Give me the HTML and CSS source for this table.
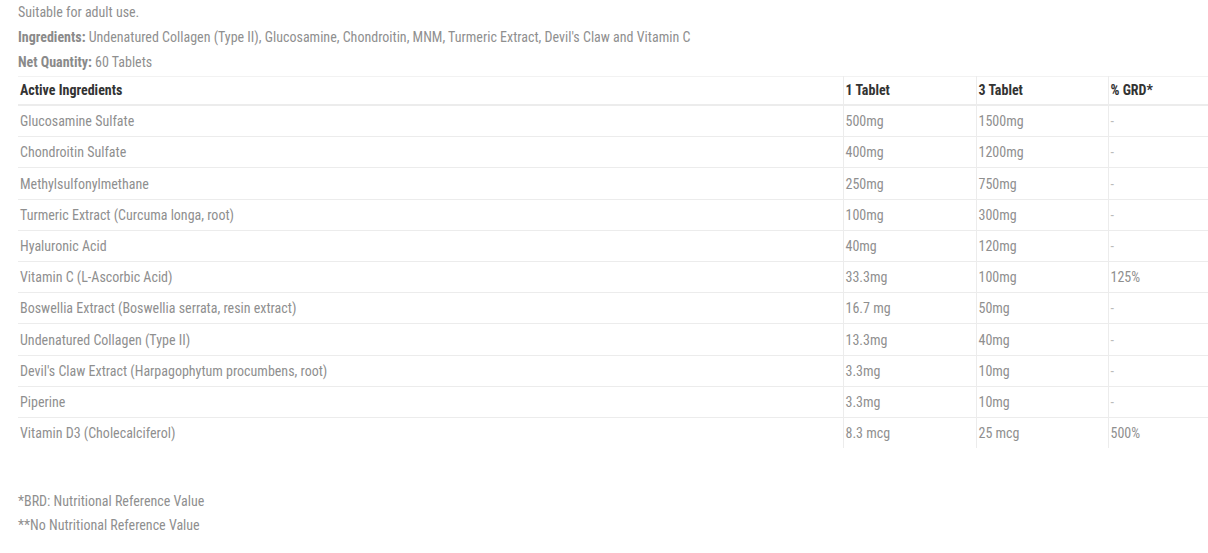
FILE: index.html
```html
<!DOCTYPE html>
<html>
<head>
<meta charset="utf-8">
<link rel="stylesheet" href="styles.css">
</head>
<body>
<div class="page">
  <p class="line">Suitable for adult use.</p>
  <p class="line"><strong>Ingredients:</strong> Undenatured Collagen (Type II), Glucosamine, Chondroitin, MNM, Turmeric Extract, Devil's Claw and Vitamin C</p>
  <p class="line"><strong>Net Quantity:</strong> 60 Tablets</p>
  <table class="facts">
    <colgroup>
      <col class="c1"><col class="c2"><col class="c3"><col class="c4">
    </colgroup>
    <thead>
      <tr><th>Active Ingredients</th><th>1 Tablet</th><th>3 Tablet</th><th>% GRD*</th></tr>
    </thead>
    <tbody>
      <tr><td>Glucosamine Sulfate</td><td>500mg</td><td>1500mg</td><td class="dash">-</td></tr>
      <tr><td>Chondroitin Sulfate</td><td>400mg</td><td>1200mg</td><td class="dash">-</td></tr>
      <tr><td>Methylsulfonylmethane</td><td>250mg</td><td>750mg</td><td class="dash">-</td></tr>
      <tr><td>Turmeric Extract (Curcuma longa, root)</td><td>100mg</td><td>300mg</td><td class="dash">-</td></tr>
      <tr><td>Hyaluronic Acid</td><td>40mg</td><td>120mg</td><td class="dash">-</td></tr>
      <tr><td>Vitamin C (L-Ascorbic Acid)</td><td>33.3mg</td><td>100mg</td><td>125%</td></tr>
      <tr><td>Boswellia Extract (Boswellia serrata, resin extract)</td><td>16.7 mg</td><td>50mg</td><td class="dash">-</td></tr>
      <tr><td>Undenatured Collagen (Type II)</td><td>13.3mg</td><td>40mg</td><td class="dash">-</td></tr>
      <tr><td>Devil's Claw Extract (Harpagophytum procumbens, root)</td><td>3.3mg</td><td>10mg</td><td class="dash">-</td></tr>
      <tr><td>Piperine</td><td>3.3mg</td><td>10mg</td><td class="dash">-</td></tr>
      <tr><td>Vitamin D3 (Cholecalciferol)</td><td>8.3 mcg</td><td>25 mcg</td><td>500%</td></tr>
    </tbody>
  </table>
  <div class="notes">
    <p class="line">*BRD: Nutritional Reference Value</p>
    <p class="line">**No Nutritional Reference Value</p>
  </div>
</div>
</body>
</html>
```
FILE: styles.css
```css
html, body {
  margin: 0;
  padding: 0;
  background: #fff;
  overflow: hidden;
}
body {
  font-family: "Roboto Condensed", "Liberation Sans Narrow", "DejaVu Sans Condensed", Roboto, sans-serif;
  font-size: 14px;
  color: #8f8f8f;
}
.page {
  padding-left: 18px;
  width: 1222px;
}
.line {
  margin: 0;
  line-height: 25px;
}
.line strong {
  font-weight: 700;
  color: #8a8a8a;
}
.facts {
  width: 1222px;
  border-collapse: collapse;
  table-layout: fixed;
  margin-top: 1px;
  border-top: 1px solid #f2f2f2;
}
.c1 { width: 825px; }
.c2 { width: 133px; }
.c3 { width: 132px; }
.c4 { width: 132px; }
.facts th {
  text-align: left;
  font-weight: 700;
  color: #333;
  line-height: 20px;
  padding: 3px 2px 4px 2px;
  border-bottom: 2px solid #ececec;
}
.facts td {
  line-height: 21px;
  padding: 5.2px 2px 4px 2px;
  border-top: 1px solid #ececec;
}
.facts tbody tr:first-child td {
  border-top: none;
}
.facts th + th,
.facts td + td {
  border-left: 1px solid #ececec;
}
.facts td.dash {
  color: #bbb;
}
.notes {
  margin-top: 41px;
}
.notes .line + .line {
  margin-top: -1px;
}
```
